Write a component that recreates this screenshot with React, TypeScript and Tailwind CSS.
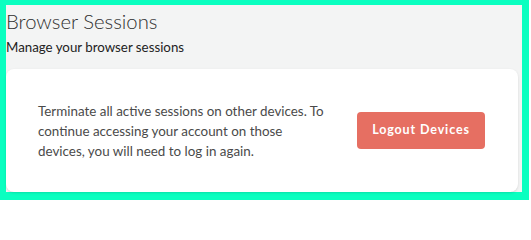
import React from "react";

export default function App() {
  return (
    <div className="w-[531px] h-[203px] bg-white overflow-hidden">
      <div
        className="w-[529px] h-[200px] border-[#0affc0] border-l-[6px] border-t-[5px] border-r-[7px] border-b-[8px] bg-[#f3f4f4] flex flex-col"
        style={{ fontFamily: "Lato, 'Noto Sans', sans-serif" }}
      >
        <div className="pt-[2px]">
          <h2 className="text-[20.3px] leading-[28px] font-light text-[#2f2f2f]">Browser Sessions</h2>
          <p className="text-[13.3px] leading-[20px] mt-[2px] text-[#222]">Manage your browser sessions</p>
        </div>
        <div className="mt-[12px] mr-[4px] h-[123px] bg-white rounded-lg shadow-sm flex items-center justify-between pl-[32px] pr-[33px]">
          <p className="w-[292px] text-[13.4px] leading-[20px] text-[#4a4a4a]">
            Terminate all active sessions on other devices. To continue accessing your account on those devices, you will need to log in again.
          </p>
          <button className="w-[128px] h-[37px] rounded-[4px] bg-[#e66f62] text-white text-[12.5px] font-bold tracking-[0.07em]">
            Logout Devices
          </button>
        </div>
      </div>
    </div>
  );
}
